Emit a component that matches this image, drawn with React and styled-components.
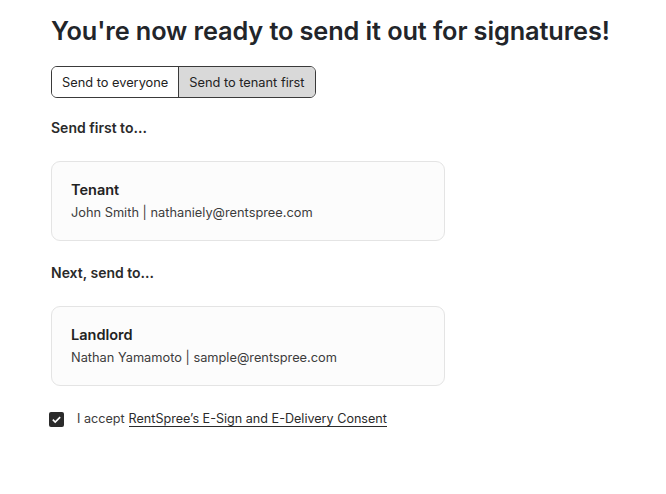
import React, { useState } from "react";
import styled, { createGlobalStyle } from "styled-components";

const GlobalStyle = createGlobalStyle`
  body {
    margin: 0;
    background: #ffffff;
    font-family: Inter, "Noto Sans", sans-serif;
    color: #222222;
  }
`;

const Page = styled.div`
  padding: 14px 51px 0;
  display: flex;
  flex-direction: column;
`;

const Title = styled.h1`
  margin: 0;
  font-size: 25.3px;
  font-weight: 600;
  line-height: 34px;
  color: #22252a;
  letter-spacing: -0.1px;
`;

const Toggle = styled.div`
  margin-top: 18px;
  display: inline-flex;
  align-self: flex-start;
  border: 1px solid #3a3a3a;
  border-radius: 6px;
  overflow: hidden;
`;

const ToggleButton = styled.button`
  font-family: Inter, sans-serif;
  font-size: 12.8px;
  color: #222222;
  height: 30px;
  padding: 0 10px;
  border: none;
  background: ${(p) => (p.$active ? "#d9d9d9" : "#ffffff")};
  border-left: ${(p) => (p.$first ? "none" : "1px solid #3a3a3a")};
  cursor: pointer;
`;

const Label = styled.div`
  margin-top: ${(p) => p.$top}px;
  font-size: 14px;
  font-weight: 600;
  color: #2a2a2a;
  line-height: 18px;
`;

const Card = styled.div`
  margin-top: 24px;
  width: 394px;
  height: 80px;
  box-sizing: border-box;
  border: 1px solid #e4e4e4;
  border-radius: 9px;
  background: #fcfcfc;
  padding: 19px 19px 0;
  display: flex;
  flex-direction: column;
  gap: 5px;
`;

const Role = styled.div`
  font-size: 14.5px;
  font-weight: 600;
  color: #222222;
  line-height: 18px;
`;

const Detail = styled.div`
  font-size: 12.8px;
  color: #3c3c3c;
  line-height: 18px;
`;

const Consent = styled.label`
  margin-top: 25px;
  display: flex;
  align-items: center;
  gap: 13px;
  font-size: 12.6px;
  color: #3c3c3c;
  margin-left: -2px;
  cursor: pointer;
`;

const Box = styled.span`
  width: 15px;
  height: 15px;
  border-radius: 2px;
  background: #2b2b2b;
  display: flex;
  align-items: center;
  justify-content: center;
`;

const Text = styled.span`
  display: flex;
  align-items: baseline;
  gap: 4px;
`;

const Link = styled.span`
  display: inline-block;
  color: #2b2b2b;
  line-height: 15px;
  border-bottom: 1px solid #2b2b2b;
`;

const recipients = [
  { label: "Send first to...", role: "Tenant", name: "John Smith", email: "nathaniely@rentspree.com", top: 21 },
  { label: "Next, send to...", role: "Landlord", name: "Nathan Yamamoto", email: "sample@rentspree.com", top: 23 },
];

export default function App() {
  const [mode, setMode] = useState("tenant");
  const [accepted, setAccepted] = useState(true);

  return (
    <>
      <GlobalStyle />
      <Page>
        <Title>You're now ready to send it out for signatures!</Title>
        <Toggle>
          <ToggleButton $first $active={mode === "all"} onClick={() => setMode("all")}>
            Send to everyone
          </ToggleButton>
          <ToggleButton $active={mode === "tenant"} onClick={() => setMode("tenant")}>
            Send to tenant first
          </ToggleButton>
        </Toggle>

        {recipients.map((r) => (
          <React.Fragment key={r.role}>
            <Label $top={r.top}>{r.label}</Label>
            <Card>
              <Role>{r.role}</Role>
              <Detail>
                {r.name} | {r.email}
              </Detail>
            </Card>
          </React.Fragment>
        ))}

        <Consent onClick={() => setAccepted(!accepted)}>
          <Box>
            {accepted && (
              <svg width="11" height="11" viewBox="0 0 12 12">
                <path d="M2 6.2l2.6 2.6L10 3.4" fill="none" stroke="#fff" strokeWidth="1.8" />
              </svg>
            )}
          </Box>
          <Text>
            I accept<Link>RentSpree’s E-Sign and E-Delivery Consent</Link>
          </Text>
        </Consent>
      </Page>
    </>
  );
}
